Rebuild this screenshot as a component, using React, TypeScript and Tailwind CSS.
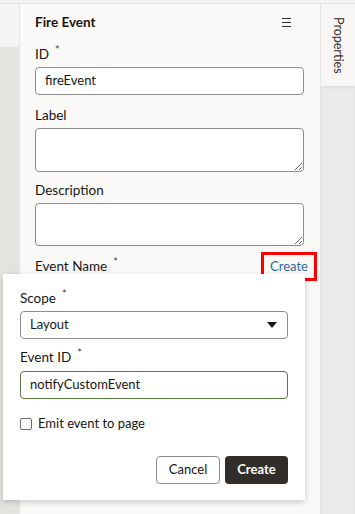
import React from "react";

const font = { fontFamily: 'Lato, "Noto Sans", Arial, sans-serif' };

const FieldLabel = ({ text, required }: { text: string; required?: boolean }) => (
  <div className="flex h-[20px] items-center text-[13.5px] text-[#161513]">
    <span>{text}</span>
    {required && <span className="ml-[6px] -mt-[8px] text-[11px] text-[#4a4643]">*</span>}
  </div>
);

const Popup = () => (
  <div className="absolute left-[3px] top-[274px] w-[302px] bg-white px-[17px] pb-[16px] pt-[14px] shadow-[0_2px_6px_rgba(0,0,0,0.2)]">
    <FieldLabel text="Scope" required />
    <div className="mt-[3px] flex h-[28px] items-center justify-between rounded-[4px] border border-[#8f8d8b] bg-white pl-[9px] pr-[10px] text-[13px] text-[#161513]">
      <span>Layout</span>
      <svg width="10" height="6" viewBox="0 0 10 6">
        <path d="M0 0h10L5 6z" fill="#161513" />
      </svg>
    </div>
    <div className="mt-[8px]">
      <FieldLabel text="Event ID" required />
    </div>
    <div className="mt-[4px] flex h-[28px] items-center rounded-[4px] border border-[#5a7a43] bg-white pl-[9px] text-[13px] text-[#161513]">
      notifyCustomEvent
    </div>
    <label className="mt-[15px] flex h-[20px] items-center gap-[6px] text-[13px] text-[#161513]">
      <span className="h-[12px] w-[12px] rounded-[2px] border-[1.5px] border-[#6f6c69]" />
      <span>Emit event to page</span>
    </label>
    <div className="mt-[22px] flex justify-end gap-[5px]">
      <button className="h-[28px] w-[64px] rounded-[4px] border border-[#8f8d8b] bg-white text-[13px] text-[#161513]">
        Cancel
      </button>
      <button className="h-[28px] w-[63px] rounded-[4px] bg-[#312d2a] text-[13px] font-bold text-white">
        Create
      </button>
    </div>
  </div>
);

export default function App() {
  return (
    <div className="relative h-[514px] w-[355px] overflow-hidden bg-[#f5f4f2] pt-[3px]" style={font}>
      <div className="flex h-[511px] border-t border-[#e2e0dd]">
        <div className="flex w-[19px] flex-col">
          <div className="h-[43px] bg-[#f6f5f3]" />
          <div className="flex-1 bg-[#e5e3e0]" />
        </div>
        <div className="w-[302px] border-l border-r border-[#e6e4e1] bg-[#faf9f8] pl-[15px] pr-[16px]">
          <div className="flex h-[40px] items-center justify-between pb-[4px]">
            <span className="text-[13.5px] font-bold text-[#161513]">Fire Event</span>
            <svg width="9" height="9" viewBox="0 0 9 9" className="mr-[13px]">
              <path d="M0 0.5h9M0 4.5h9M0 8.5h9" stroke="#312d2a" strokeWidth="1" />
            </svg>
          </div>
          <FieldLabel text="ID" required />
          <div className="mt-[3px] flex h-[28px] items-center rounded-[4px] border border-[#8f8d8b] bg-white pl-[9px] text-[13px] text-[#161513]">
            fireEvent
          </div>
          <div className="mt-[10px]">
            <FieldLabel text="Label" />
          </div>
          <textarea className="mt-[3px] block h-[44px] w-full resize-y rounded-[4px] border border-[#8f8d8b] bg-white" />
          <div className="mt-[8px]">
            <FieldLabel text="Description" />
          </div>
          <textarea className="mt-[3px] block h-[43px] w-full resize-y rounded-[4px] border border-[#8f8d8b] bg-white" />
          <div className="mt-[6px] flex items-center justify-between">
            <FieldLabel text="Event Name" required />
            <span className="-mr-[13px] flex h-[29px] w-[56px] items-center justify-center border-[3px] border-[#ff0000] text-[13px] text-[#2c6aa3]">
              Create
            </span>
          </div>
        </div>
        <div className="flex w-[34px] flex-col bg-[#f7f6f4]">
          <div className="flex h-[82px] justify-center pt-[13px]">
            <span className="text-[12.5px] text-[#312d2a] [writing-mode:vertical-rl]">Properties</span>
          </div>
          <div className="flex-1 bg-[#ecebe9] shadow-[inset_0_2px_3px_rgba(0,0,0,0.06)]" />
        </div>
      </div>
      <Popup />
    </div>
  );
}
